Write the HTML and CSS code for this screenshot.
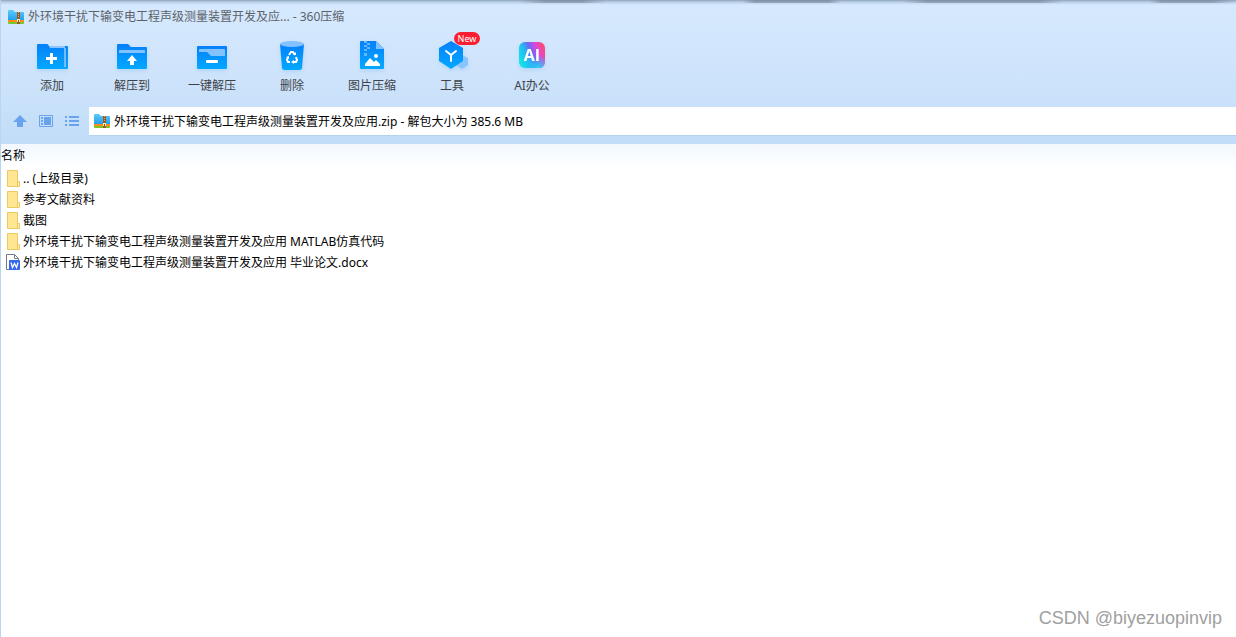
FILE: index.html
```html
<!DOCTYPE html>
<html lang="zh-CN">
<head>
<meta charset="utf-8">
<title>360压缩</title>
<link rel="stylesheet" href="styles.css">
</head>
<body>
<svg class="defs" aria-hidden="true">
  <defs>
    <linearGradient id="blue" x1="0" y1="0" x2="0" y2="1"><stop offset="0" stop-color="#0580fa"/><stop offset="1" stop-color="#02a9ff"/></linearGradient>
    <linearGradient id="sky" x1="0" y1="0" x2="0" y2="1"><stop offset="0" stop-color="#5dcbfb"/><stop offset="1" stop-color="#1e9cec"/></linearGradient>
    <linearGradient id="ai" x1="0" y1="0.7" x2="1" y2="0.3"><stop offset="0" stop-color="#12e5e6"/><stop offset="0.3" stop-color="#20bdf2"/><stop offset="0.52" stop-color="#6a6af5"/><stop offset="0.75" stop-color="#df45dc"/><stop offset="1" stop-color="#fb4b72"/></linearGradient>
    <radialGradient id="glow" cx="0.75" cy="1" r="0.5"><stop offset="0" stop-color="#22d8f6"/><stop offset="1" stop-color="#22c8f6" stop-opacity="0"/></radialGradient>
    <symbol id="zip" viewBox="0 0 16 14">
      <path d="M0 1q0-1 1-1h4l2 2h8q1 0 1 1v8H0z" fill="url(#sky)"/>
      <path d="M0 10h16v2H0z" fill="#ff8b18"/><path d="M0 12h16v1q0 1-1 1H1q-1 0-1-1z" fill="#79c52b"/>
      <path d="M9 2h3v12H9z" fill="#9a5a20"/>
      <path d="M10 2h1v1h-1zM10 4h1v1h-1zM10 6h1v1h-1z" fill="#e9a24c"/>
      <path d="M9 9h3v3H9z" fill="#fff0bd"/><path d="M10 10h1v2h-1z" fill="#8d4b16"/>
    </symbol>
    <symbol id="folder" viewBox="0 0 14 17">
      <path d="M1.500.5h10v11h1v5h-11z" fill="#ffe693" stroke="#ecca62"/>
      <path d="M11.500 11.500h2v5h-2z" fill="#fff0b4" stroke="#ecca62"/>
    </symbol>
  </defs>
</svg>
<div class="window">
  <header class="chrome">
    <div class="titlebar">
      <svg class="zip"><use href="#zip"/></svg>
      <h1 class="title">外环境干扰下输变电工程声级测量装置开发及应... - 360压缩</h1>
    </div>
    <nav class="toolbar">
      <button class="tool">
        <svg class="tool-icon" viewBox="0 0 32 32"><path d="M1 5q0-1 1-1h9q1 0 2 2h18q1 0 1 1v21q0 1-1 1H2q-1 0-1-1z" fill="url(#blue)"/><path d="M13 6h15q1 0 1 1v1H14z" fill="#8fc5ff"/><path d="M28 8h2v19h-2z" fill="#75bcff"/><path d="M14 13h3v4h4v3h-4v4h-3v-4h-4v-3h4z" fill="#fff"/></svg>
        <span>添加</span>
      </button>
      <button class="tool">
        <svg class="tool-icon" viewBox="0 0 32 32"><path d="M1 5q0-1 1-1h10l3 3h15q1 0 1 1v20q0 1-1 1H2q-1 0-1-1z" fill="url(#blue)"/><path d="M3 11q0-1 1-1h24q1 0 1 1v2H3z" fill="#83c2ff"/><path d="M16 15l5 6h-3v4h-4v-4h-3z" fill="#fff"/></svg>
        <span>解压到</span>
      </button>
      <button class="tool">
        <svg class="tool-icon" viewBox="0 0 32 32"><rect x="1" y="6" width="30" height="23" rx="1" fill="url(#blue)"/><path d="M3 10q0-1 1-1h24q1 0 1 1v6H15l-4-4H3z" fill="#83c2ff"/><rect x="10" y="20" width="12" height="3" rx="1" fill="#fff"/></svg>
        <span>一键解压</span>
      </button>
      <button class="tool">
        <svg class="tool-icon" viewBox="0 0 32 32"><path d="M4 4h24l-2 24q0 2-4 2H10q-4 0-4-2z" fill="url(#blue)"/><ellipse cx="16" cy="4" rx="12" ry="3" fill="#83c2ff"/><g fill="none" stroke="#fff" stroke-width="2"><path d="M13 15l2-3h2l2 3M20 17l1 3-1 2h-3M14 22h-2l-1-2 1-3"/></g><path d="M17 15h3v-3zM18 20v4l-3-2zM10 17l3-1v3z" fill="#fff"/></svg>
        <span>删除</span>
      </button>
      <button class="tool">
        <svg class="tool-icon" viewBox="0 0 32 32"><path d="M4 2q0-1 1-1h15l8 8v19q0 1-1 1H5q-1 0-1-1z" fill="url(#blue)"/><path d="M20 1l8 8h-8z" fill="#83c2ff"/><path d="M8 1h3v2h3v2h-3v2h3v2h-3v2H8V9h3V7H8V5h3V3H8zM8 13h3v3H8z" fill="#65b7ff"/><circle cx="20" cy="16" r="2" fill="#fff"/><path d="M9 26v-2l5-6 4 4 2-2 4 4v2z" fill="#fff"/></svg>
        <span>图片压缩</span>
      </button>
      <button class="tool">
        <svg class="tool-icon" viewBox="0 0 32 32"><path d="M26 15l6 3v7l-6 4-6-4v-7z" fill="#89c5fc"/><path d="M15 1l12 7v13l-12 8-12-8V8z" fill="url(#blue)"/><path d="M10 11l5 4 5-4M15 15v6" fill="none" stroke="#fff" stroke-width="2" stroke-linecap="round"/></svg>
        <span>工具</span>
        <b class="badge">New</b>
      </button>
      <button class="tool">
        <svg class="tool-icon" viewBox="0 0 32 32"><rect x="3" y="2" width="26" height="26" rx="6" fill="url(#ai)"/><rect x="3" y="2" width="26" height="26" rx="6" fill="url(#glow)"/><text class="ai-text" x="16" y="21" text-anchor="middle">AI</text></svg>
        <span>AI办公</span>
      </button>
    </nav>
    <div class="pathbar">
      <div class="path-tools">
        <button class="mini" aria-label="上级目录"><svg viewBox="0 0 16 14"><path d="M8 1l7 7h-4v5H5V8H1z" fill="#69a3ed"/></svg></button>
        <button class="mini" aria-label="预览"><svg viewBox="0 0 16 14"><path d="M1.500 1.500h13v11h-13z" fill="none" stroke="#69a3ed"/><path d="M6 3h7v8H6zM3 3h2v2H3zM3 6h2v2H3zM3 9h2v2H3z" fill="#69a3ed"/></svg></button>
        <button class="mini" aria-label="列表"><svg viewBox="0 0 16 14"><path d="M1 2h2v2H1zM5 2h10v2H5zM1 6h2v2H1zM5 6h10v2H5zM1 10h2v2H1zM5 10h10v2H5z" fill="#69a3ed"/></svg></button>
      </div>
      <label class="address">
        <svg class="zip"><use href="#zip"/></svg>
        <input type="text" aria-label="路径" value="外环境干扰下输变电工程声级测量装置开发及应用.zip - 解包大小为 385.6 MB">
      </label>
    </div>
  </header>
  <main class="files">
    <table class="list">
      <thead><tr><th>名称</th></tr></thead>
      <tbody>
        <tr><td><div class="entry"><svg class="file-icon"><use href="#folder"/></svg>.. (上级目录)</div></td></tr>
        <tr><td><div class="entry"><svg class="file-icon"><use href="#folder"/></svg>参考文献资料</div></td></tr>
        <tr><td><div class="entry"><svg class="file-icon"><use href="#folder"/></svg>截图</div></td></tr>
        <tr><td><div class="entry"><svg class="file-icon"><use href="#folder"/></svg>外环境干扰下输变电工程声级测量装置开发及应用 MATLAB仿真代码</div></td></tr>
        <tr><td><div class="entry"><svg class="file-icon" viewBox="0 0 14 17"><path d="M.5.500h8l4 4v11H.5z" fill="#fff" stroke="#747b88"/><path d="M8.500.500v4h4" fill="none" stroke="#747b88"/><rect x="3" y="6" width="11" height="10" rx="1" fill="#3568f0"/><path d="M5 8.500l1.500 5 2-4 2 4 1.500-5" fill="none" stroke="#fff" stroke-width="1.300"/></svg>外环境干扰下输变电工程声级测量装置开发及应用 毕业论文.docx</div></td></tr>
      </tbody>
    </table>
    <p class="watermark">CSDN @biyezuopinvip</p>
  </main>
</div>
</body>
</html>
```
FILE: styles.css
```css
* { box-sizing: border-box; }
body {
  margin: 0;
  font: 12px/16px "Noto Sans", "Noto Sans CJK SC", sans-serif;
  color: #000;
  background: #fff;
}
button { padding: 0; border: 0; background: none; font: inherit; color: inherit; }
.defs { position: absolute; width: 0; height: 0; }
.window {
  min-height: 100vh;
  display: flex;
  flex-direction: column;
  border-left: 1px solid #b9d5f5;
}
.chrome {
  padding-bottom: 8px;
  background:
    linear-gradient(90deg, transparent 42%, #65768a80 44% 47%, transparent 49% 60%, #65768a80 61% 67%, transparent 68% 73%, #65768a80 75% 84%, transparent 86% 93%, #65768a80 94% 98%, transparent) top / 100% 3px no-repeat,
    linear-gradient(#8fa5bc, #b9cee4 2px, transparent 5px),
    linear-gradient(#d6e9fe, #d0e5fc 60px, #c2ddf8);
}
.titlebar {
  height: 32px;
  padding: 1px 0 0 7px;
  display: flex;
  align-items: center;
  gap: 4px;
}
.zip { width: 16px; height: 14px; flex: none; }
.title { margin: 0; font: inherit; color: #5d6269; }
.toolbar { display: flex; padding-left: 11px; height: 75px; }
.tool {
  position: relative;
  width: 80px;
  display: flex;
  flex-direction: column;
  align-items: center;
  padding-top: 8px;
  gap: 6px;
  color: #3f4347;
}
.tool-icon { width: 32px; height: 32px; filter: drop-shadow(0 2px 2px #4499ee33); }
.ai-text { font: bold 16px "Open Sans", sans-serif; fill: #fff; }
.badge {
  position: absolute;
  top: 0;
  left: 42px;
  width: 26px;
  border-radius: 7px;
  background: #fa1f30;
  color: #fff;
  font: 9px/13px "Noto Sans", sans-serif;
}
.pathbar { display: flex; height: 29px; }
.path-tools { display: flex; align-items: center; gap: 10px; padding: 0 9px 1px 11px; }
.mini { width: 16px; height: 14px; }
.mini svg { display: block; width: 16px; height: 14px; }
.address {
  flex: 1;
  display: flex;
  align-items: center;
  gap: 4px;
  padding-left: 5px;
  background: #fff;
  border-bottom: 1px solid #b4d3f3;
}
.address input {
  flex: 1;
  min-width: 0;
  padding: 2px 0 0;
  border: 0;
  outline: 0;
  background: none;
  font: inherit;
  color: inherit;
}
.files { flex: 1; display: flex; flex-direction: column; }
.list { width: 100%; border-collapse: collapse; }
.list th {
  height: 24px;
  padding: 0;
  text-align: left;
  font-weight: normal;
  background: linear-gradient(#f2f8fe, #fff);
}
.list td { padding: 0; }
.entry { display: flex; align-items: center; gap: 3px; height: 21px; padding-left: 5px; }
.file-icon { width: 14px; height: 17px; flex: none; }
.watermark {
  margin: auto 14px 8px auto;
  font: 18px/22px "Liberation Sans", sans-serif;
  color: #a0a0a0;
}
```
